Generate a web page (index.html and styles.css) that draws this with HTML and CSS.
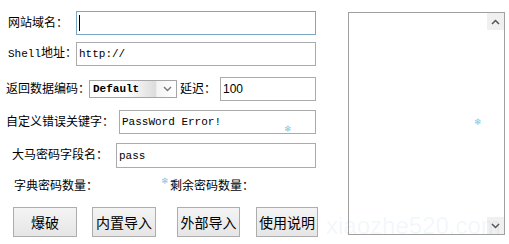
FILE: index.html
```html
<!DOCTYPE html>
<html lang="zh-CN">
<head>
    <meta charset="UTF-8">
    <title>Shell爆破</title>
    <link rel="stylesheet" href="styles.css">
</head>
<body>
    <div class="app">
        <div class="form">
            <div class="row r-url">
                <label class="lbl w-url" for="url">网站域名：</label>
                <div class="field-wrap">
                    <input class="field focused w-long" id="url" type="text">
                    <span class="caret"></span>
                </div>
            </div>
            <div class="row r-shell">
                <label class="lbl w-url" for="shell"><span class="mono">Shell</span>地址：</label>
                <input class="field mono-val w-long" id="shell" type="text" value="http://">
            </div>
            <div class="row r-enc">
                <label class="lbl w-enc">返回数据编码：</label>
                <div class="select">
                    <span class="select-text">Default</span>
                    <svg class="chev" width="9" height="6" viewBox="0 0 9 6"><path d="M1 1 L4.5 4.5 L8 1" fill="none" stroke="#777" stroke-width="1.4"/></svg>
                </div>
                <label class="lbl w-delay" for="delay">延迟：</label>
                <input class="field sans-val w-delay-in" id="delay" type="text" value="100">
            </div>
            <div class="row r-err">
                <label class="lbl w-err" for="err">自定义错误关键字：</label>
                <input class="field mono-val w-err-in" id="err" type="text" value="PassWord Error!">
            </div>
            <div class="row r-pass">
                <label class="lbl w-pass" for="pass">大马密码字段名：</label>
                <input class="field mono-val w-pass-in" id="pass" type="text" value="pass">
            </div>
            <div class="row r-count">
                <span class="lbl w-count">字典密码数量：</span>
                <span class="lbl">剩余密码数量：</span>
            </div>
            <div class="buttons">
                <button class="btn">爆破</button>
                <button class="btn b2">内置导入</button>
                <button class="btn b3">外部导入</button>
                <button class="btn b4">使用说明</button>
            </div>
        </div>
        <div class="log">
            <div class="log-body"></div>
            <div class="scroll">
                <span class="arrow">
                    <svg width="9" height="6" viewBox="0 0 9 6"><path d="M1 5 L4.5 1.5 L8 5" fill="none" stroke="#555" stroke-width="1.5"/></svg>
                </span>
                <span class="arrow">
                    <svg width="9" height="6" viewBox="0 0 9 6"><path d="M1 1 L4.5 4.5 L8 1" fill="none" stroke="#555" stroke-width="1.5"/></svg>
                </span>
            </div>
        </div>
    </div>

    <span class="flake f1">❄</span>
    <span class="flake f2">❄</span>
    <span class="flake f3">❄</span>
    <div class="watermark">xiaozhe520.com</div>
</body>
</html>
```

FILE: styles.css
```css
body {
    margin: 0;
    background: #fff;
    font-family: "Noto Sans CJK SC", "Noto Sans", sans-serif;
    font-size: 12px;
    color: #000;
}

.app {
    display: flex;
    position: relative;
}

.form {
    width: 348px;
}

.row {
    display: flex;
    align-items: center;
    height: 24px;
}

.r-url {
    margin-top: 11px;
    padding-left: 8px;
}

.r-shell {
    margin-top: 7px;
    padding-left: 8px;
}

.r-enc {
    margin-top: 11px;
    padding-left: 6px;
}

.r-err {
    margin-top: 9px;
    padding-left: 6px;
}

.r-pass {
    margin-top: 9px;
    padding-left: 12px;
    height: 25px;
}

.r-count {
    margin-top: 10px;
    padding-left: 14px;
    height: 16px;
}

.lbl {
    display: block;
    line-height: 16px;
    margin-top: -3px;
    white-space: nowrap;
}

.mono {
    font-family: "Liberation Mono", monospace;
    font-size: 11px;
}

.w-url { width: 68px; }
.w-enc { width: 83px; }
.w-delay { width: 40px; margin-left: 3px; }
.w-err { width: 113px; }
.w-pass { width: 104px; }
.w-count { width: 156px; }

.field-wrap {
    position: relative;
    height: 24px;
}

.caret {
    position: absolute;
    left: 3px;
    top: 4px;
    width: 1px;
    height: 16px;
    background: #000;
}

.field {
    box-sizing: border-box;
    height: 24px;
    border: 1px solid #ababab;
    padding: 0 2px;
    margin: 0;
    outline: none;
    background: #fff;
    color: #000;
}

.focused {
    border-color: #7ba6c6;
}

.mono-val {
    font-family: "Liberation Mono", monospace;
    font-size: 11px;
}

.sans-val {
    font-family: "Liberation Sans", sans-serif;
    font-size: 12px;
}

.w-long { width: 240px; }
.w-delay-in { width: 96px; }
.w-err-in { width: 197px; }
.w-pass-in { width: 200px; height: 25px; }

.select {
    box-sizing: border-box;
    width: 88px;
    height: 18px;
    border: 1px solid #a5a5a5;
    display: flex;
    align-items: center;
    justify-content: space-between;
    padding: 0 4px 0 3px;
    background: linear-gradient(to right, #fff 0%, #fff 42%, #dcdcdc 76%, #f4f4f4 78%, #fff 100%);
}

.select-text {
    font-family: "Liberation Mono", monospace;
    font-size: 11px;
    font-weight: bold;
}

.chev {
    display: block;
}

.buttons {
    display: flex;
    margin-top: 13px;
    padding-left: 13px;
}

.btn {
    box-sizing: border-box;
    width: 64px;
    height: 30px;
    border: 1px solid #adadad;
    background: linear-gradient(#f4f4f4, #e6e6e6);
    font-family: "Noto Sans CJK SC", sans-serif;
    font-size: 14px;
    color: #000;
    padding: 0;
    cursor: pointer;
}

.b2 { margin-left: 15px; }
.b3 { margin-left: 21px; width: 63px; }
.b4 { margin-left: 16px; width: 62px; }

.log {
    box-sizing: border-box;
    margin-top: 12px;
    width: 157px;
    height: 223px;
    border: 1px solid #a0a0a0;
    display: flex;
    background: #fff;
}

.log-body {
    flex: 1;
}

.scroll {
    width: 17px;
    display: flex;
    flex-direction: column;
    justify-content: space-between;
}

.arrow {
    height: 17px;
    background: #f0f0f0;
    display: flex;
    align-items: center;
    justify-content: center;
}

.flake {
    position: absolute;
    color: #86bedd;
    font-size: 9px;
    line-height: 9px;
}

.f1 { left: 284px; top: 124px; }
.f2 { left: 474px; top: 117px; }
.f3 { left: 161px; top: 176px; }

.watermark {
    position: absolute;
    left: 326px;
    top: 212px;
    font-family: "Liberation Sans", sans-serif;
    font-size: 24px;
    color: rgba(110, 175, 215, 0.10);
    white-space: nowrap;
}
```
